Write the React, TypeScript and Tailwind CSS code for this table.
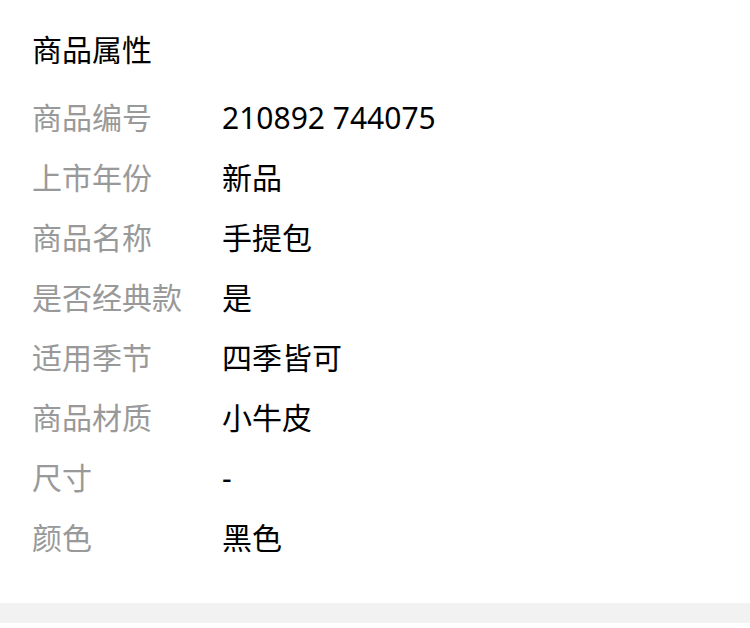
const ROWS: [string, string][] = [
  ['商品编号', '210892 744075'],
  ['上市年份', '新品'],
  ['商品名称', '手提包'],
  ['是否经典款', '是'],
  ['适用季节', '四季皆可'],
  ['商品材质', '小牛皮'],
  ['尺寸', '-'],
  ['颜色', '黑色'],
];

export default function App() {
  return (
    <div
      className="flex h-[628px] w-[750px] flex-col bg-white"
      style={{ fontFamily: '"Noto Sans", "Noto Sans CJK SC", sans-serif' }}
    >
      <div className="px-[32px] pt-[20px] pb-[35px]">
        <div className="text-[30px] leading-[60px] text-black">商品属性</div>
        <div className="mt-[8px] flex flex-col">
          {ROWS.map(([label, value]) => (
            <div key={label} className="flex text-[30px] leading-[60px]">
              <div className="w-[190px] shrink-0 text-[#999999]">{label}</div>
              <div className="text-black">{value}</div>
            </div>
          ))}
        </div>
      </div>
      <div className="h-[20px] bg-[#f2f2f2]" />
    </div>
  );
}
